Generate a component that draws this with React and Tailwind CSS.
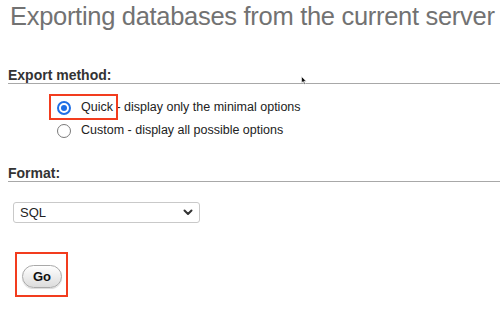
import React from "react";

// Radio drawn like Chrome's native one
const Radio = ({ checked }) =>
  checked ? (
    <span className="w-[14px] h-[14px] rounded-full border-2 border-[#1f6fe5] bg-white flex items-center justify-center shrink-0">
      <span className="w-[6px] h-[6px] rounded-full bg-[#1f6fe5]" />
    </span>
  ) : (
    <span className="w-[14px] h-[14px] rounded-full border border-[#7a7a7a] bg-white shrink-0" />
  );

const SectionTitle = ({ children, className = "" }) => (
  <h3 className={`text-[14px] leading-[16px] font-bold text-[#333] border-b border-[#a8a8a8] ${className}`}>
    {children}
  </h3>
);

const App = () => {
  return (
    <div className="relative w-[500px] h-[311px] overflow-hidden bg-white font-['Liberation_Sans',Arial,sans-serif]">
      <h2 className="text-[25.5px] leading-[32px] tracking-[-0.3px] text-[#727272] pl-[10px] whitespace-nowrap">
        Exporting databases from the current server
      </h2>

      <div className="ml-[8px]">
        <SectionTitle className="mt-[35px]">Export method:</SectionTitle>

        <div className="mt-[12px] pl-[49px] text-[12.5px] text-[#222]">
          <label className="h-[23px] flex items-center gap-[10px]">
            <Radio checked />
            <span>Quick - display only the minimal options</span>
          </label>
          <label className="h-[23px] flex items-center gap-[10px]">
            <Radio />
            <span>Custom - display all possible options</span>
          </label>
        </div>

        <SectionTitle className="mt-[23px]">Format:</SectionTitle>

        <div className="mt-[20px] ml-[5px] w-[187px] h-[21px] border border-[#c9c9c9] rounded-[3px] bg-white flex items-center justify-between pl-[6px] pr-[6px] text-[13px] text-[#222]">
          <span>SQL</span>
          <svg width="10" height="7" viewBox="0 0 10 7">
            <path d="M1.5 1.5 L5 5 L8.5 1.5" fill="none" stroke="#333" strokeWidth="2" strokeLinecap="round" strokeLinejoin="round" />
          </svg>
        </div>

        <button className="mt-[42px] ml-[14px] w-[40px] h-[23px] rounded-full border border-[#a9a9a9] bg-gradient-to-b from-white to-[#dcdcdc] text-[13px] font-bold text-[#111] flex items-center justify-center shadow-[0_1px_1px_rgba(0,0,0,0.15)]">
          Go
        </button>
      </div>

      {/* highlight boxes */}
      <div className="absolute left-[49px] top-[94px] w-[69px] h-[26px] border-2 border-[#f23c1e]" />
      <div className="absolute left-[15px] top-[252px] w-[53px] h-[45px] border-2 border-[#f23c1e]" />

      {/* mouse pointer */}
      <svg className="absolute left-[301px] top-[76px]" width="6" height="9" viewBox="0 0 6 9">
        <path d="M0.5 0.5 L0.5 7 L2 5.5 L3.3 8.3 L4.3 7.8 L3.1 5.2 L5.3 5.2 Z" fill="#111" stroke="#fff" strokeWidth="0.6" />
      </svg>
    </div>
  );
};

export default App;
